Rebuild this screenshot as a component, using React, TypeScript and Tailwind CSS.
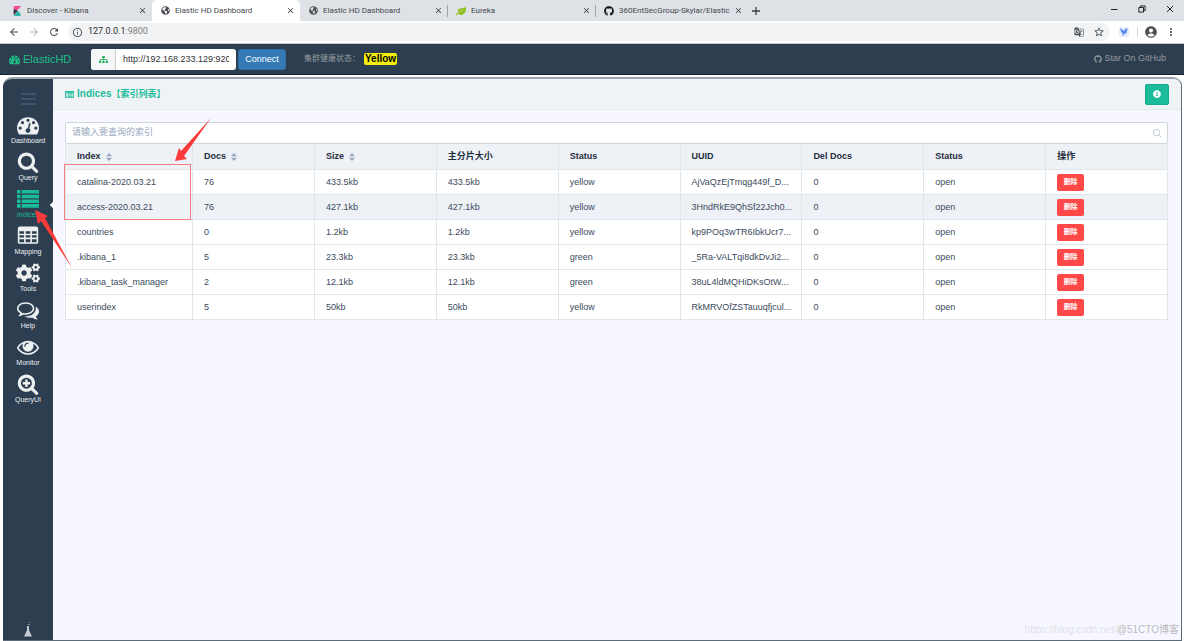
import { useState } from "react";
import type { ReactNode } from "react";
import { FaCogs, FaGithub, FaGlobeAmericas, FaInfoCircle, FaLeaf, FaSitemap } from "react-icons/fa";
import {
  MdAccountCircle,
  MdArrowBack,
  MdArrowForward,
  MdClose,
  MdGTranslate,
  MdInfoOutline,
  MdMoreVert,
  MdRefresh,
  MdStarBorder,
} from "react-icons/md";

const SEARCH_RING =
  "M1216 832q0-185-131.5-316.5t-316.5-131.5-316.5 131.5-131.5 316.5 131.5 316.5 316.5 131.5 316.5-131.5 131.5-316.5zm512 832q0 52-38 90t-90 38q-54 0-90-38l-343-342q-179 124-399 124-143 0-273.5-55.5t-225-150-150-225-55.5-273.5 55.5-273.5 150-225 225-150 273.5-55.5 273.5 55.5 225 150 150 225 55.5 273.5q0 220-124 399l343 343q37 37 37 90z";

const ICONS = {
  dashboard:
    "M384 1152q0-53-37.5-90.5t-90.5-37.5-90.5 37.5-37.5 90.5 37.5 90.5 90.5 37.5 90.5-37.5 37.5-90.5zm192-448q0-53-37.5-90.5t-90.5-37.5-90.5 37.5-37.5 90.5 37.5 90.5 90.5 37.5 90.5-37.5 37.5-90.5zm428 481l101-382q6-26-7.5-48.5t-38.5-29.5-48 6.5-30 39.5l-101 382q-60 5-107 43.5t-63 98.5q-20 77 20 146t117 89 146-20 89-117q16-60-6-117t-72-91zm660-33q0-53-37.5-90.5t-90.5-37.5-90.5 37.5-37.5 90.5 37.5 90.5 90.5 37.5 90.5-37.5 37.5-90.5zm-640-640q0-53-37.5-90.5t-90.5-37.5-90.5 37.5-37.5 90.5 37.5 90.5 90.5 37.5 90.5-37.5 37.5-90.5zm448 192q0-53-37.5-90.5t-90.5-37.5-90.5 37.5-37.5 90.5 37.5 90.5 90.5 37.5 90.5-37.5 37.5-90.5zm320 448q0 261-141 483-19 29-54 29h-1402q-35 0-54-29-141-221-141-483 0-182 71-348t191-286 286-191 348-71 348 71 286 191 191 286 71 348z",
  search: SEARCH_RING,
  list: "M0 160h288v288H0zM384 160h1408v288H384zM0 544h288v288H0zM384 544h1408v288H384zM0 928h288v288H0zM384 928h1408v288H384zM0 1312h288v288H0zM384 1312h1408v288H384z",
  table:
    "M224 128h1344q66 0 113 47t47 113v1088q0 66-47 113t-113 47H224q-66 0-113-47t-47-113V288q0-66 47-113t113-47zM192 512v192h384V512zM704 512v192h384V512zM1216 512v192h384V512zM192 832v192h384V832zM704 832v192h384V832zM1216 832v192h384V832zM192 1152v256h384v-256zM704 1152v256h384v-256zM1216 1152v256h384v-256z",
  comments:
    "M704 384q-153 0-286 52t-211.5 141-78.5 191q0 82 53 158t149 132l97 56-35 84q34-20 62-39l44-31 53 10q78 14 153 14 153 0 286-52t211.5-141 78.5-191-78.5-191-211.5-141-286-52zm0-128q191 0 353.5 68.5t256.5 186.5 94 257-94 257-256.5 186.5-353.5 68.5q-86 0-176-16-124 88-278 128-36 9-86 16h-3q-11 0-20.5-8t-11.5-21q-1-3-1-6.5t.5-6.5 2-6l2.5-5 3.5-5.5 4-5 4.5-5 4-4.5q5-6 23-25t26-29.5 22.5-29 25-38.5 20.5-44q-124-72-195-177t-71-224q0-139 94-257t256.5-186.5 353.5-68.5zm822 1169q10 24 20.5 44t25 38.5 22.5 29 26 29.5 23 25q1 1 4 4.5t4.5 5 4 5 3.5 5.5l2.5 5 2 6 .5 6.5-1 6.5q-3 14-13 22t-22 7q-50-7-86-16-154-40-278-128-90 16-176 16-271 0-472-132 58 4 88 4 161 0 309-45t264-129q125-92 192-212t67-254q0-77-23-152 129 71 204 178t75 230q0 120-71 224.5t-195 176.5z",
  eye: "M1664 960q-152-236-381-353 61 104 61 225 0 185-131.5 316.5t-316.5 131.5-316.5-131.5-131.5-316.5q0-121 61-225-229 117-381 353 133 205 333.5 326.5t434.5 121.5 434.5-121.5 333.5-326.5zm-720-384q0-20-14-34t-34-14q-125 0-214.5 89.5t-89.5 214.5q0 20 14 34t34 14 34-14 14-34q0-86 61-147t147-61q20 0 34-14t14-34zm848 384q0 34-20 69-140 230-376.5 368.5t-499.5 138.5-499.5-139-376.5-368q-20-35-20-69t20-69q140-229 376.5-368t499.5-139 499.5 139 376.5 368q20 35 20 69z",
  searchPlus:
    "M1072 768v128q0 13-9.5 22.500t-22.500 9.500h-176v176q0 13-9.500 22.500t-22.500 9.500h-128q-13 0-22.500-9.500t-9.500-22.500v-176h-176q-13 0-22.500-9.500t-9.500-22.500v-128q0-13 9.500-22.500t22.500-9.500h176v-176q0-13 9.500-22.500t22.500-9.500h128q13 0 22.500 9.500t9.500 22.500v176h176q13 0 22.500 9.500t9.500 22.500z" +
    SEARCH_RING,
  listAlt:
    "M160 192h1472q66 0 113 47t47 113v1088q0 66-47 113t-113 47H160q-66 0-113-47T0 1440V352q0-66 47-113t113-47zM160 560v880h1472V560zM288 640h192v160H288zM600 640h904v160H600zM288 920h192v160H288zM600 920h904v160H600zM288 1200h192v160H288zM600 1200h904v160H600z",
};

function Glyph({ d, className }: { d: string; className: string }) {
  return (
    <svg viewBox="0 0 1792 1792" fill="currentColor" fillRule="evenodd" className={className} aria-hidden="true">
      <path d={d} />
    </svg>
  );
}

function KibanaIcon() {
  return (
    <svg viewBox="0 0 10 12" className="h-[10px] w-[10px]" aria-hidden="true">
      <path d="M1 0h9L1 10z" fill="#f04e98" />
      <path d="M1 4q3 .3 5 2L1 11z" fill="#343741" />
      <path d="M6.2 5.6Q9.4 8 9.6 12H1z" fill="#2bb5a8" />
    </svg>
  );
}

const TABS: { title: string; icon: ReactNode; active?: boolean; line?: boolean }[] = [
  { title: "Discover - Kibana", icon: <KibanaIcon /> },
  { title: "Elastic HD Dashboard", icon: <FaGlobeAmericas size={9} color="#4d5156" />, active: true },
  { title: "Elastic HD Dashboard", icon: <FaGlobeAmericas size={9} color="#4d5156" />, line: true },
  { title: "Eureka", icon: <FaLeaf size={10} color="#93bf1f" />, line: true },
  { title: "360EntSecGroup-Skylar/Elastic", icon: <FaGithub size={10} color="#111" />, line: true },
];

const NAV: { label: string; icon: ReactNode }[] = [
  { label: "Dashboard", icon: <Glyph d={ICONS.dashboard} className="size-[22px]" /> },
  { label: "Query", icon: <Glyph d={ICONS.search} className="size-[22px]" /> },
  { label: "Indices", icon: <Glyph d={ICONS.list} className="size-[22px]" /> },
  { label: "Mapping", icon: <Glyph d={ICONS.table} className="size-[22px]" /> },
  { label: "Tools", icon: <FaCogs size={24} /> },
  { label: "Help", icon: <Glyph d={ICONS.comments} className="size-[22px]" /> },
  { label: "Monitor", icon: <Glyph d={ICONS.eye} className="size-[22px]" /> },
  { label: "QueryUI", icon: <Glyph d={ICONS.searchPlus} className="size-[22px]" /> },
];

const COLUMNS = [
  { title: "Index", sortable: true },
  { title: "Docs", sortable: true },
  { title: "Size", sortable: true },
  { title: "主分片大小" },
  { title: "Status" },
  { title: "UUID" },
  { title: "Del Docs" },
  { title: "Status" },
  { title: "操作" },
];

const ROWS = [
  ["catalina-2020.03.21", "76", "433.5kb", "433.5kb", "yellow", "AjVaQzEjTmqg449f_D...", "0", "open"],
  ["access-2020.03.21", "76", "427.1kb", "427.1kb", "yellow", "3HndRkE9QhSf22Jch0...", "0", "open"],
  ["countries", "0", "1.2kb", "1.2kb", "yellow", "kp9POq3wTR6IbkUcr7...", "0", "open"],
  [".kibana_1", "5", "23.3kb", "23.3kb", "green", "_5Ra-VALTqi8dkDvJi2...", "0", "open"],
  [".kibana_task_manager", "2", "12.1kb", "12.1kb", "green", "38uL4ldMQHiDKsOtW...", "0", "open"],
  ["userindex", "5", "50kb", "50kb", "yellow", "RkMRVOfZSTauuqfjcul...", "0", "open"],
];

function TabStrip() {
  return (
    <div className="flex h-[21px] items-stretch bg-[#dee1e6] pl-1 font-['Roboto',sans-serif] text-[8px] text-[#45494d]">
      {TABS.map((tab, i) => (
        <div
          key={i}
          className={
            tab.active
              ? "flex w-[148px] items-center rounded-t-[5px] bg-white pr-[5px] pl-2"
              : "flex w-[148px] items-center pr-[5px] pl-2"
          }
        >
          <span className="flex w-[10px] shrink-0 justify-center">{tab.icon}</span>
          <span className="ml-[5px] flex-1 whitespace-nowrap">{tab.title}</span>
          <button aria-label="Close tab" className="ml-1 text-[#3c4043]">
            <MdClose size={9} />
          </button>
          {tab.line && <span className="-mr-[5px] ml-1 h-3 w-px bg-[#a0a4a9]" />}
        </div>
      ))}
      <button aria-label="New tab" className="ml-[7px] flex items-center text-[#3c4043]">
        <svg viewBox="0 0 10 10" className="size-[10px]" stroke="currentColor" strokeWidth="1.3">
          <path d="M5 1v8M1 5h8" />
        </svg>
      </button>
      <div className="ml-auto flex h-[17px] items-center gap-[20px] pr-[10px] text-[#222]">
        <button aria-label="Minimize">
          <svg viewBox="0 0 8 8" className="size-2" stroke="currentColor" fill="none">
            <path d="M1 4.5h6.5" />
          </svg>
        </button>
        <button aria-label="Restore">
          <svg viewBox="0 0 8 8" className="size-2" stroke="currentColor" fill="none">
            <path d="M.9 2.5h4.6v4.6H.9zM2.5 2.5V.9h4.6v4.6H5.5" />
          </svg>
        </button>
        <button aria-label="Close">
          <svg viewBox="0 0 8 8" className="size-2" stroke="currentColor" fill="none">
            <path d="M1 1l6 6M7 1L1 7" />
          </svg>
        </button>
      </div>
    </div>
  );
}

function AddressBar() {
  return (
    <div className="flex h-[23px] items-center border-b border-[#c4c8cc] bg-white pr-[7px] pl-2 text-[#4d5156]">
      <button aria-label="Back"><MdArrowBack size={12} /></button>
      <button aria-label="Forward" className="ml-2 text-[#b4b7ba]"><MdArrowForward size={12} /></button>
      <button aria-label="Reload" className="ml-2"><MdRefresh size={12} /></button>
      <div className="ml-2 flex h-[18px] flex-1 items-center rounded-full bg-[#f1f3f4] pr-[5px] pl-1">
        <MdInfoOutline size={11} />
        <span className="ml-[5px] flex-1 font-['Roboto',sans-serif] text-[9px] text-[#7b7f83]">
          <span className="text-[#2b2e31]">127.0.0.1</span>:9800
        </span>
        <MdGTranslate size={10} />
        <MdStarBorder size={12} className="ml-[9px]" />
      </div>
      <span className="ml-[9px] flex size-[10px] items-center justify-center bg-[#e6ecfb]">
        <svg viewBox="0 0 10 10" className="size-[10px]" aria-hidden="true">
          <path d="M1 1l4 3 1-2 1.5-.5L9 2 8 3q0 4-3 4L4 9.5 3.5 6.5Q1.5 5 1 1z" fill="#5a8bf5" />
        </svg>
      </span>
      <span className="ml-2 h-[10px] w-px bg-[#d5d8db]" />
      <MdAccountCircle size={14} className="ml-[6px]" />
      <button aria-label="Menu" className="ml-[7px]"><MdMoreVert size={12} /></button>
    </div>
  );
}

function TopBar() {
  const [url, setUrl] = useState("http://192.168.233.129:9200");

  return (
    <header className="flex h-[31px] items-center border-b border-[#16242f] bg-[#2c3e50] pr-[18px] pl-[9px]">
      <a href="#" className="flex w-[82px] items-center gap-[3px] text-[11px] text-[#1fbf85]">
        <Glyph d={ICONS.dashboard} className="size-[11px]" />
        ElasticHD
      </a>
      <div className="flex h-[21px] w-[145px] overflow-hidden rounded-[3px] bg-white">
        <span className="flex w-[25px] items-center justify-center border-r border-[#ccc] bg-[#f5f6f7] text-[#27ae60]">
          <FaSitemap size={9} />
        </span>
        <input
          aria-label="Elasticsearch address"
          value={url}
          onChange={(e) => setUrl(e.target.value)}
          className="min-w-0 flex-1 px-[7px] pt-px text-[9px] text-[#333] outline-none"
        />
      </div>
      <button className="ml-[2px] h-[21px] w-12 rounded-[3px] border border-[#2e6da4] bg-[#337ab7] pt-px text-[9px] text-white">
        Connect
      </button>
      <div className="ml-[18px] flex items-center text-[8px] text-[#95999d]">
        集群健康状态：
        <span className="ml-1 rounded-[2px] bg-[#f5ee0a] px-px text-[10px] leading-3 font-bold text-black">
          Yellow
        </span>
      </div>
      <a href="#" className="ml-auto flex items-center gap-[2px] text-[9px] text-[#95999d]">
        <FaGithub size={8} />
        Star On GitHub
      </a>
    </header>
  );
}

function Sidebar() {
  return (
    <nav className="flex w-[50px] shrink-0 flex-col items-center bg-[#2c3e50] text-[#ecf0f1]">
      <button aria-label="Toggle menu" className="mt-[14px] mb-[9px] flex w-[15px] flex-col gap-[3px]">
        <span className="h-[2px] w-full bg-[#3d566e]" />
        <span className="h-[2px] w-full bg-[#3d566e]" />
        <span className="h-[2px] w-full bg-[#3d566e]" />
      </button>
      {NAV.map((item) => (
        <a
          key={item.label}
          href="#"
          className={
            item.label === "Indices"
              ? "relative flex h-[37px] w-full flex-col items-center text-[#1abc9c]"
              : "relative flex h-[37px] w-full flex-col items-center"
          }
        >
          <span className="flex h-[22px] items-center">{item.icon}</span>
          <span className="text-[7px] leading-[10px]">{item.label}</span>
          {item.label === "Indices" && (
            <span className="absolute top-[14px] -right-1 size-[6px] rotate-45 bg-[#f7f8ff]" />
          )}
        </a>
      ))}
      <svg viewBox="0 0 8 15" className="mt-auto mb-[3px] h-[15px] w-2" fill="#c3cad0" aria-hidden="true">
        <path d="M3 4h2v4l3 6.5H0L3 8z" />
        <path d="M4 2h2v1H4zM5 0h1v1H5z" fill="#7f8d99" />
      </svg>
    </nav>
  );
}

function SortCaret() {
  return (
    <svg viewBox="0 0 6 8" className="h-2 w-[6px]" fill="#97a8be" aria-hidden="true">
      <path d="M3 0l3 3.2H0zM3 8l3-3.200H0z" />
    </svg>
  );
}

function IndicesTable() {
  return (
    <table className="w-full table-fixed border-separate border-spacing-0 border-l border-[#dfe6ec] text-left text-[9px] text-[#3b4a5c]">
      <colgroup>
        <col className="w-[127px]" />
      </colgroup>
      <thead>
        <tr className="bg-[#eef1f6] text-[#1f2d3d]">
          {COLUMNS.map((col, i) => (
            <th key={i} className="h-[26px] border-r border-b border-[#dfe6ec] p-0 pt-px pl-[11px] font-bold">
              <span className="flex items-center gap-[5px]">
                {col.title}
                {col.sortable && <SortCaret />}
              </span>
            </th>
          ))}
        </tr>
      </thead>
      <tbody>
        {ROWS.map((row, i) => (
          <tr key={row[0]} className={i === 1 ? "bg-[#eef1f6]" : "bg-white"}>
            {row.map((cell, j) => (
              <td key={j} className="h-[25px] border-r border-b border-[#dfe6ec] p-0 pt-px pl-[11px] whitespace-nowrap">
                {cell}
              </td>
            ))}
            <td className="h-[25px] border-r border-b border-[#dfe6ec] p-0 pl-[11px]">
              <button className="block h-[17px] w-[27px] rounded-[2px] bg-[#ff4949] text-[7px] font-bold text-white">
                删除
              </button>
            </td>
          </tr>
        ))}
      </tbody>
    </table>
  );
}

// red box and arrows pointing at the imported log indices
function Annotations() {
  return (
    <>
      <div className="pointer-events-none absolute top-[42px] -left-px h-14 w-[127px] border border-[#f58080]" />
      <svg
        viewBox="0 0 180 160"
        className="pointer-events-none absolute -top-1 -left-8 h-[160px] w-[180px]"
        fill="#fb3a3a"
        aria-hidden="true"
      >
        <path d="M178 0L151 38l3 3-12 2 4-13 2 3z" />
        <path d="M2 92l13 6-3 2 27 50L8 103l-3 3z" />
      </svg>
    </>
  );
}

export default function App() {
  const [query, setQuery] = useState("");

  return (
    <div className="relative flex min-h-screen flex-col bg-white font-['Liberation_Sans','Noto_Sans_CJK_SC',sans-serif]">
      <TabStrip />
      <AddressBar />
      <TopBar />
      <div className="mt-[2px] mr-[2px] ml-[3px] flex flex-1 overflow-hidden rounded-t-[9px] border-t-2 border-r border-b border-t-[#9aa4ae] border-r-[#5d6b79] border-b-[#5d6b79] bg-[#f7f8ff]">
        <Sidebar />
        <main className="min-w-0 flex-1">
          <div className="flex h-[31px] items-center justify-between border-b border-[#e4eaec] bg-[#eff3f6] pr-3 pl-3">
            <h1 className="flex items-baseline text-[10px] font-bold text-[#1abc9c]">
              <Glyph d={ICONS.listAlt} className="mr-[3px] size-[9px] self-center" />
              Indices<span className="text-[9px]">【索引列表】</span>
            </h1>
            <button
              aria-label="Info"
              className="flex h-[21px] w-6 items-center justify-center rounded-[2px] border border-[#18a88b] bg-[#1abc9c] text-white"
            >
              <FaInfoCircle size={8} />
            </button>
          </div>
          <div className="relative mt-3 mr-[13px] ml-3">
            <div className="flex h-[22px] items-center rounded-[2px] border border-[#cdd5df] bg-white pr-[5px] pl-[6px]">
              <input
                aria-label="Search indices"
                placeholder="请输入要查询的索引"
                value={query}
                onChange={(e) => setQuery(e.target.value)}
                className="min-w-0 flex-1 text-[9px] text-[#3b4a5c] outline-none placeholder:text-[#97a8be]"
              />
              <svg viewBox="0 0 10 10" className="size-[10px]" fill="none" stroke="#bfcbd9" aria-hidden="true">
                <circle cx="4.5" cy="4.5" r="3.2" />
                <path d="M7 7l2.2 2.2" />
              </svg>
            </div>
            <IndicesTable />
            <Annotations />
          </div>
        </main>
      </div>
      <div className="pointer-events-none absolute right-[5px] bottom-1 flex items-center text-[10px] text-[#b9bac0]">
        <span className="text-[#e0e1e8]">https://blog.csdn.net/</span>
        <span>@51CTO博客</span>
      </div>
    </div>
  );
}
